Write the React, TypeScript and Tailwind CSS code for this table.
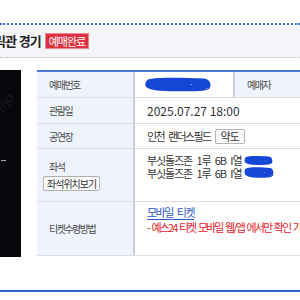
const LABEL_BG = '#eff4fc';
const VALUE_LINE = '#dedede';

function Blob({ w, h }: { w: number; h: number }) {
  return (
    <svg width={w} height={h} viewBox="0 0 100 40" preserveAspectRatio="none" className="inline-block align-middle shrink-0" aria-hidden="true">
      <path d="M6 8 C20 2 60 4 88 6 C98 8 100 22 96 30 C90 38 60 36 30 35 C10 34 0 28 2 18 C3 12 4 10 6 8 Z" fill="#1546d6" />
      <circle cx="70" cy="20" r="1.2" fill="#c8d4ff" />
      <circle cx="92" cy="30" r="1.2" fill="#c8d4ff" />
    </svg>
  );
}

function Label({ children, className = '' }: { children: React.ReactNode; className?: string }) {
  return (
    <div
      className={`w-[98px] shrink-0 border-r-2 border-r-[#c3cde6] pl-3 text-[10px] tracking-[-1.5px] text-[#4a4a4a] flex ${className}`}
      style={{ backgroundColor: LABEL_BG }}
    >
      {children}
    </div>
  );
}

export default function App() {
  return (
    <div className="w-[300px] h-[300px] overflow-hidden bg-white font-['Noto_Sans_CJK_KR',sans-serif] text-[#333] [word-spacing:3px]">
      <div className="h-[23px]" />

      <div className="h-[35px] bg-[#f4f5f8] border-t-2 border-t-[#3d6fd2] border-b border-dotted border-b-[#b8b8b8] flex items-center gap-[4px] whitespace-nowrap">
        <span className="ml-[-28px] text-[13px] font-bold text-[#222] tracking-[-1px] [word-spacing:1px]">퍼블릭관 경기</span>
        <span className="h-4 px-[3px] flex items-center bg-[#dc3140] border border-[#f08890] text-white text-[11px] tracking-[-1px] leading-none">
          예매완료
        </span>
      </div>

      <div className="flex pt-[12px]">
        <div className="w-[21px] h-[187px] shrink-0 bg-[#07060a] relative overflow-hidden">
          <span className="absolute left-[-4px] top-[22px] -rotate-[55deg] text-[14px] text-[#1d1d22] font-['Liberation_Sans',sans-serif]">
            //jo
          </span>
          <div className="absolute left-[1px] top-[90px] w-[5px] h-px bg-[#aaa]" />
        </div>

        <div className="ml-[16px] w-[400px] shrink-0 border-t-2 border-t-[#4a78d2] whitespace-nowrap">
          <div className="flex h-[26px] border-b" style={{ borderColor: VALUE_LINE }}>
            <Label className="items-center">예매번호</Label>
            <div className="w-[98px] shrink-0 flex items-center pl-[9px]">
              <Blob w={68} h={17} />
            </div>
            <div className="flex-1 bg-[#eff4fc] border-l-2 border-l-[#c3cde6] pl-3 text-[10px] tracking-[-1.5px] text-[#4a4a4a] flex items-center">
              예매자
            </div>
          </div>

          <div className="flex h-[26px] border-b" style={{ borderColor: VALUE_LINE }}>
            <Label className="items-center">관람일</Label>
            <div className="pl-[12px] flex items-center text-[12px] [word-spacing:0px]">2025.07.27 18:00</div>
          </div>

          <div className="flex h-[25px] border-b" style={{ borderColor: VALUE_LINE }}>
            <Label className="items-center">공연장</Label>
            <div className="pl-[12px] flex items-center gap-[4px] text-[11px] tracking-[-1.6px]">
              인천 랜더스필드
              <span className="h-[15px] px-[5px] flex items-center border border-[#b5b5b5] rounded-[2px] bg-[#fafafa] text-[11px] tracking-[-1px]">
                약도
              </span>
            </div>
          </div>

          <div className="flex h-[53px] border-b" style={{ borderColor: VALUE_LINE }}>
            <Label className="flex-col justify-center pl-[6px]">
              <span className="pl-[6px] leading-[14px]">좌석</span>
              <span className="mt-[2px] self-start h-[15px] px-[3px] flex items-center border border-[#b0b0b0] rounded-[2px] bg-[#fbfbfb] text-[10px] tracking-[-1px] text-[#333]">
                좌석위치보기
              </span>
            </Label>
            <div className="pl-[12px] pt-[5px] flex flex-col text-[11px] tracking-[-1.1px] leading-[12px]">
              <div className="flex items-center gap-[2px]">
                <span>부싯돌즈존 1루 6B I열</span>
                <Blob w={29} h={11} />
              </div>
              <div className="flex items-center gap-[2px]">
                <span>부싯돌즈존 1루 6B I열</span>
                <Blob w={30} h={13} />
              </div>
            </div>
          </div>

          <div className="flex h-[54px] border-b" style={{ borderColor: VALUE_LINE }}>
            <Label className="items-center">티켓수령방법</Label>
            <div className="pl-[12px] pt-[3px] flex flex-col text-[11px] tracking-[-1.5px] leading-[15px]">
              <span className="self-start text-[#2b57c8] underline underline-offset-2">모바일 티켓</span>
              <span className="text-[#e5212c] tracking-[-1.9px] [word-spacing:2px]">- 예스24 티켓 모바일 웹/앱 에서만 확인 가능</span>
            </div>
          </div>
        </div>
      </div>

      <div className="mt-[33px] h-[2px] bg-[#2e68d2]" />
    </div>
  );
}
